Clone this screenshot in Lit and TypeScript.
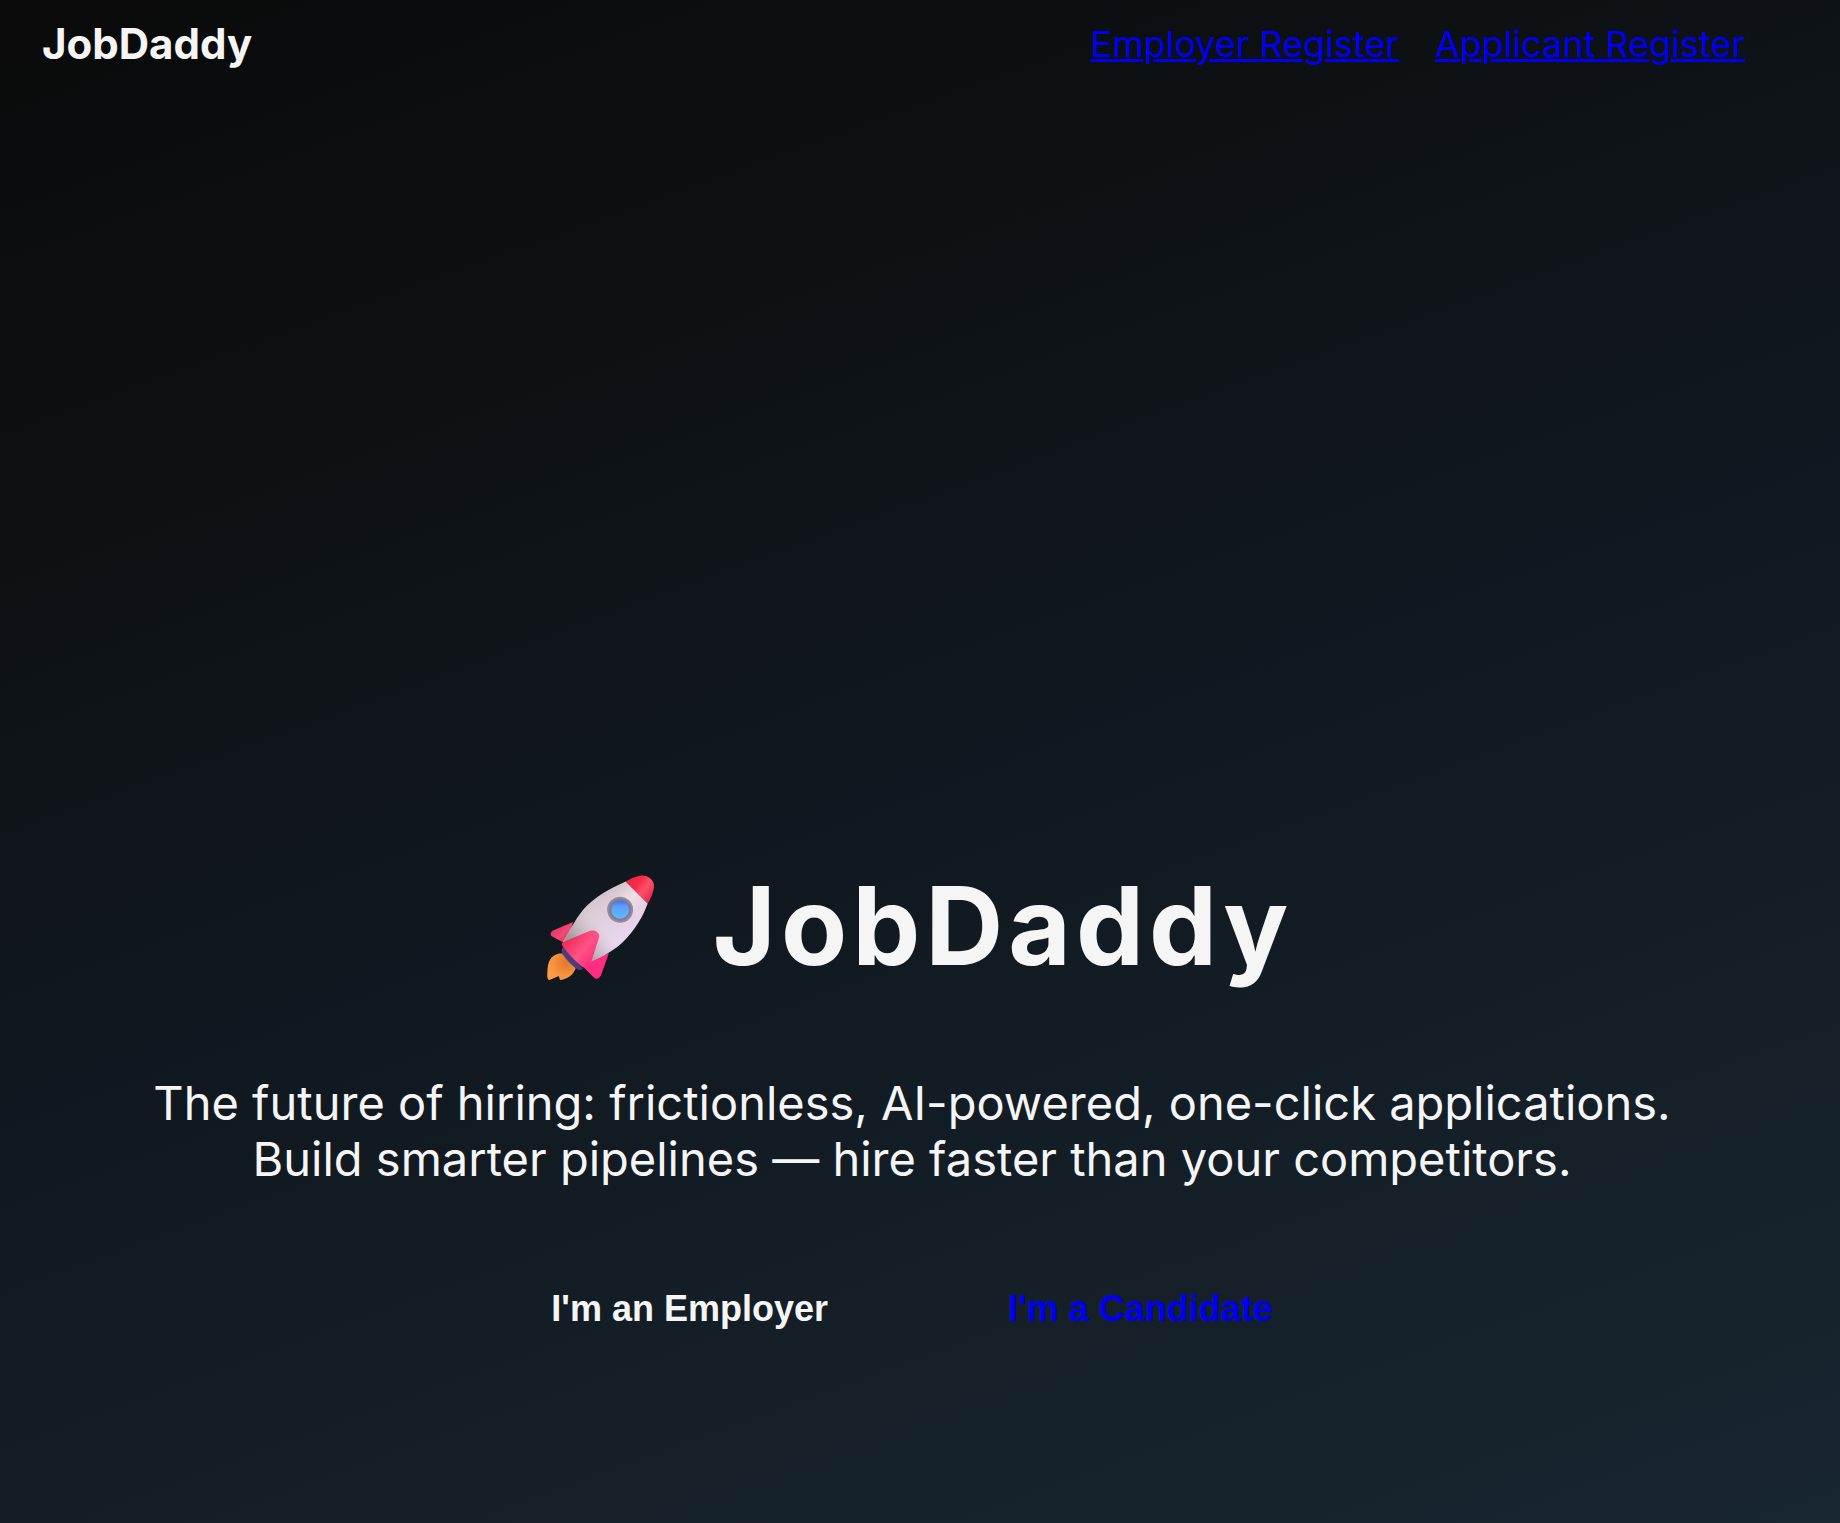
import { LitElement, html, css } from "lit";
import { customElement } from "lit/decorators.js";

@customElement("rocket-icon")
export class RocketIcon extends LitElement {
  static styles = css`
    :host {
      display: block;
      padding-top: 4px;
    }
    .art {
      display: block;
      width: 108px;
      height: 108px;
    }
  `;

  render() {
    return html`
      <svg class="art" viewBox="2 0 325 320" role="img" aria-label="Rocket">
        <defs>
          <linearGradient id="hull" x1="105" y1="70" x2="190" y2="210" gradientUnits="userSpaceOnUse">
            <stop offset="0" stop-color="#cdbfc8" />
            <stop offset=".35" stop-color="#dccdd6" />
            <stop offset="1" stop-color="#e9d5ee" />
          </linearGradient>
          <linearGradient id="shade" x1="65" y1="180" x2="135" y2="120" gradientUnits="userSpaceOnUse">
            <stop offset="0" stop-color="#a39b9c" />
            <stop offset="1" stop-color="#cfc0c9" stop-opacity="0" />
          </linearGradient>
          <linearGradient id="shine" x1="215" y1="35" x2="290" y2="110" gradientUnits="userSpaceOnUse">
            <stop offset="0.1" stop-color="#f9e9ee" stop-opacity="0" />
            <stop offset=".5" stop-color="#fbeaf0" stop-opacity=".6" />
            <stop offset="1" stop-color="#efdcec" stop-opacity="0" />
          </linearGradient>
          <linearGradient id="nose" x1="245" y1="20" x2="318" y2="75" gradientUnits="userSpaceOnUse">
            <stop offset="0" stop-color="#f22545" />
            <stop offset=".3" stop-color="#f72a4a" />
            <stop offset=".58" stop-color="#ff5068" />
            <stop offset="1" stop-color="#e52650" />
          </linearGradient>
          <linearGradient id="fin" x1="65" y1="195" x2="150" y2="265" gradientUnits="userSpaceOnUse">
            <stop offset="0" stop-color="#f32c5d" />
            <stop offset=".5" stop-color="#ff5486" />
            <stop offset="1" stop-color="#ff2478" />
          </linearGradient>
          <linearGradient id="back" x1="20" y1="170" x2="60" y2="210" gradientUnits="userSpaceOnUse">
            <stop offset="0" stop-color="#e93865" />
            <stop offset=".5" stop-color="#f5487a" />
            <stop offset="1" stop-color="#c72357" />
          </linearGradient>
          <linearGradient id="pane" x1="0" y1="78" x2="0" y2="132" gradientUnits="userSpaceOnUse">
            <stop offset="0" stop-color="#3b6ef2" />
            <stop offset=".3" stop-color="#5c9eff" />
            <stop offset="1" stop-color="#62b9ff" />
          </linearGradient>
          <radialGradient id="flame" cx="60" cy="262" r="58" gradientUnits="userSpaceOnUse">
            <stop offset="0" stop-color="#dc7a2c" />
            <stop offset=".5" stop-color="#f18a37" />
            <stop offset="1" stop-color="#ff9c48" />
          </radialGradient>
        </defs>
        <path fill="url(#flame)" d="M38 237C18 241 7 256 4 279C3 292 2 305 4 313Q6 318 13 315L34 306Q38 304 39 309L40 314Q43 318 50 315C68 311 80 301 88 283L82 267L54 237Z" />
        <path fill="url(#back)" d="M80 142L22 167Q8 175 15 184L50 203L70 183Z" />
        <path fill="#ff2c81" d="M188 236L164 304Q155 318 143 309L112 278L132 256Z" />
        <path fill="#4a3c7d" d="M50 217Q43 226 49 239Q68 267 93 284Q101 289 110 283Z" />
        <path fill="url(#hull)" d="M239 20C187 43 139 71 109 107C88 133 70 170 50 201L132 262C174 244 208 225 229 204C266 167 290 127 305 86Z" />
        <path fill="url(#shade)" d="M239 20C187 43 139 71 109 107C88 133 70 170 50 201L132 262C174 244 208 225 229 204C266 167 290 127 305 86Z" />
        <path fill="url(#shine)" d="M239 20C220 29 205 36 190 46L284 136L305 86Z" />
        <path fill="url(#nose)" d="M239 20Q257 8 280 3Q298 0 309 8Q326 18 324 40Q318 68 305 86Z" />
        <path fill="url(#fin)" d="M49 203L132 168Q151 164 159 180Q160 186 157 194L132 271Q126 283 108 277Q77 252 51 218Q43 208 49 203Z" />
        <circle cx="222" cy="105" r="39" fill="#938b9f" />
        <circle cx="222" cy="105" r="33" fill="#827c93" />
        <circle cx="222" cy="105" r="27" fill="url(#pane)" />
      </svg>
    `;
  }
}

@customElement("app-root")
export class AppRoot extends LitElement {
  static styles = css`
    :host {
      display: flex;
      flex-direction: column;
      box-sizing: border-box;
      min-height: 100vh;
      background: linear-gradient(160deg, #0a0a0a 0%, #10171d 47%, #182631 100%);
      color: #f5f5f5;
      font-family: Inter, "Liberation Sans", sans-serif;
    }
    .bar {
      display: flex;
      align-items: center;
      justify-content: space-between;
      padding: 19px 95px 19px 42px;
    }
    .brand {
      font-size: 42px;
      line-height: 50px;
      font-weight: 700;
    }
    .links {
      display: flex;
      gap: 36px;
      font-size: 36px;
      line-height: 44px;
    }
    .link {
      color: #0000ee;
      text-decoration: underline;
      text-decoration-thickness: 3px;
    }
    .hero {
      flex: 1;
      display: flex;
      flex-direction: column;
      align-items: center;
      justify-content: flex-end;
      padding-bottom: 193px;
      text-align: center;
    }
    .title {
      display: flex;
      align-items: center;
      gap: 58px;
      margin: 0;
      font-size: 108px;
      line-height: 130px;
      font-weight: 700;
      letter-spacing: 5px;
    }
    .lead {
      margin: 84px 16px 0 0;
      font-size: 47px;
      line-height: 56px;
    }
    .line {
      display: block;
    }
    .actions {
      display: flex;
      gap: 180px;
      margin: 101px 16px 0 0;
    }
    .action {
      padding: 0;
      border: 0;
      background: none;
      color: #f5f5f5;
      font: 700 36px/42px "Liberation Sans", Arial, sans-serif;
      text-decoration: none;
      cursor: pointer;
    }
    .candidate {
      color: #0000ee;
    }
  `;

  render() {
    return html`
      <header class="bar">
        <div class="brand">JobDaddy</div>
        <nav class="links">
          <a class="link" href="#employer-register">Employer Register</a>
          <a class="link" href="#applicant-register">Applicant Register</a>
        </nav>
      </header>
      <main class="hero">
        <h1 class="title"><rocket-icon></rocket-icon><span>JobDaddy</span></h1>
        <p class="lead">
          <span class="line">The future of hiring: frictionless, AI-powered, one-click applications.</span>
          <span class="line">Build smarter pipelines — hire faster than your competitors.</span>
        </p>
        <div class="actions">
          <button class="action" type="button">I'm an Employer</button>
          <a class="action candidate" href="#candidate">I'm a Candidate</a>
        </div>
      </main>
    `;
  }
}
